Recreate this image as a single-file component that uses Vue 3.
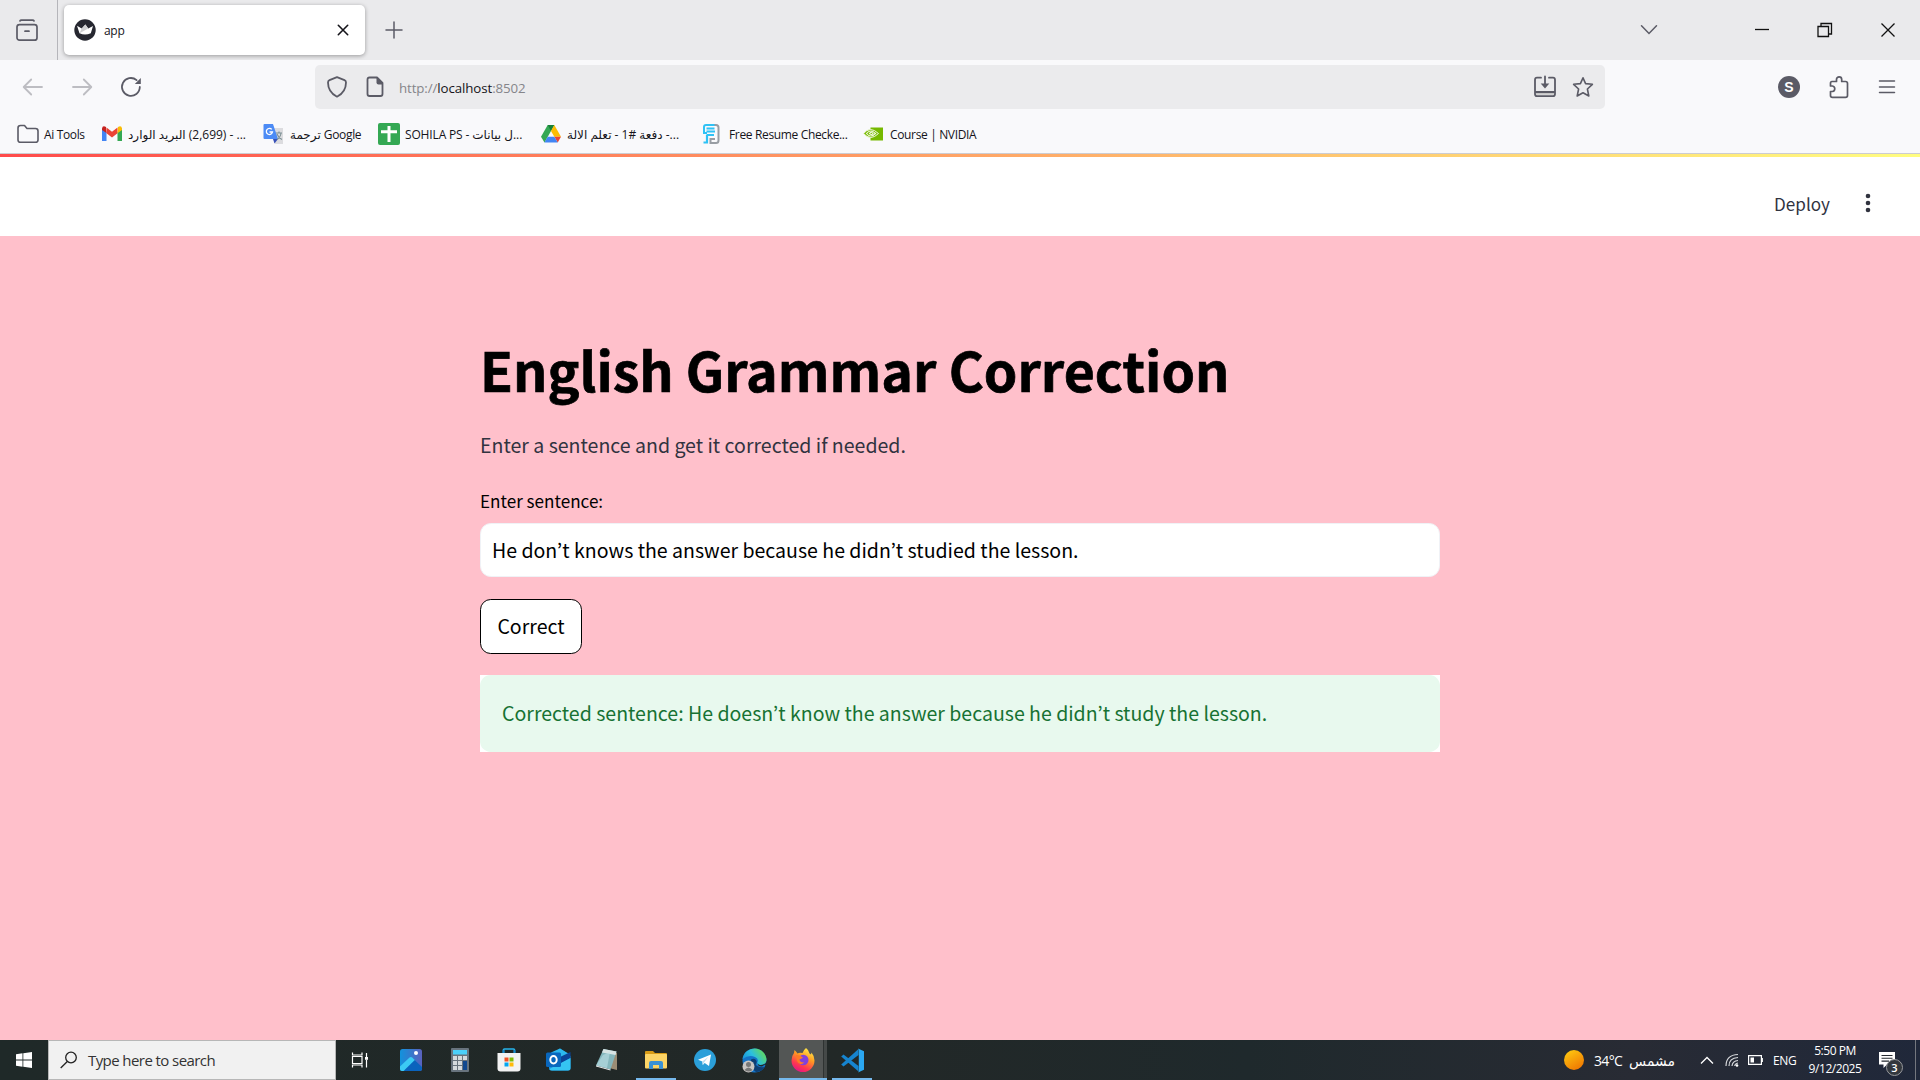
<script setup>
import { ref } from 'vue'

const sentence = ref('He don’t knows the answer because he didn’t studied the lesson.')
</script>

<template>
  <div class="screen">
    <header class="tabstrip">
      <div class="view-btn">
        <svg width="24" height="24" viewBox="0 0 24 24" fill="none" stroke="#5b5b66" stroke-width="1.7" stroke-linecap="round">
          <path d="M5 1.9Q5.3 1.2 6.500 1.200H17.500Q18.700 1.200 19 1.900" /><rect x="2" y="5.600" width="20" height="15.600" rx="2.500" /><path d="M10 12.200H14" />
        </svg>
      </div>
      <div class="tab">
        <svg width="22" height="22" viewBox="0 0 22 22">
          <circle cx="11" cy="11" r="10.700" fill="#262730" />
          <path d="M3 6.800 7.700 9.500 11.400 5.500 14.200 9.500 19 7 16.800 14.300Q11 16.700 5.500 14.300Z" fill="#fff" />
          <path d="M11.400 5.500 14.200 9.500 5.500 14.300 7.700 9.500Z" fill="#d0d0d2" />
        </svg>
        <span class="tab-title">app</span>
        <svg class="tab-close" width="12" height="12" viewBox="0 0 12 12" stroke="#15141a" stroke-width="1.600" stroke-linecap="round"><path d="M1.300 1.300 10.700 10.700M10.700 1.300 1.300 10.700" /></svg>
      </div>
      <svg class="plus" width="18" height="18" viewBox="0 0 18 18" stroke="#5b5b66" stroke-width="1.500" stroke-linecap="round"><path d="M9 1V17M1 9H17" /></svg>
      <div class="window-btns">
        <svg width="18" height="12" viewBox="0 0 18 12" fill="none" stroke="#5b5b66" stroke-width="1.500" stroke-linecap="round"><path d="M1.500 1.800 9 9.500 16.500 1.800" /></svg>
        <svg width="16" height="16" viewBox="0 0 16 16" stroke="#111" stroke-width="1.300"><path d="M1 7.500H15" /></svg>
        <svg width="16" height="16" viewBox="0 0 16 16" fill="none" stroke="#111" stroke-width="1.300"><path d="M4 4V1.500H14.500V12H12M1 4.500H11.500V14.500H1Z" /></svg>
        <svg width="16" height="16" viewBox="0 0 16 16" stroke="#111" stroke-width="1.300"><path d="M1.500 1.500 14.500 14.500M14.500 1.500 1.500 14.500" /></svg>
      </div>
    </header>

    <div class="navbar">
      <div class="nav-btns">
        <svg width="22" height="22" viewBox="0 0 22 22" fill="none" stroke="#bdbdc2" stroke-width="1.800" stroke-linecap="round" stroke-linejoin="round"><path d="M20 11H2M9.200 3.500 1.700 11 9.200 18.500" /></svg>
        <svg width="22" height="22" viewBox="0 0 22 22" fill="none" stroke="#bdbdc2" stroke-width="1.800" stroke-linecap="round" stroke-linejoin="round"><path d="M2 11H20M12.800 3.500 20.300 11 12.800 18.500" /></svg>
        <svg width="22" height="22" viewBox="0 0 22 22" fill="none" stroke="#5b5b66" stroke-width="1.800" stroke-linecap="round"><path d="M19.800 11A8.900 8.900 0 1 1 16.600 4.100" /><path d="M20.800 2V8H14.800Z" fill="#5b5b66" stroke="none" /></svg>
      </div>
      <div class="urlbar">
        <svg width="22" height="22" viewBox="0 0 22 22" fill="none" stroke="#5b5b66" stroke-width="1.800" stroke-linejoin="round"><path d="M11 1.200 18.500 4.200Q20 4.800 20 6.400 20 16 11 20.700 2 16 2 6.400 2 4.800 3.500 4.200Z" /></svg>
        <svg class="page-icon" width="18" height="22" viewBox="0 0 18 22" fill="none" stroke="#5b5b66" stroke-width="1.800"><path d="M11 1.500H3.500Q1.500 1.500 1.500 3.500V18Q1.500 20 3.500 20H14.500Q16.500 20 16.500 18V7Z" stroke-linejoin="round" /><path d="M10.500 1 17 7.500V8.500H12.500Q10.500 8.500 10.500 6.500Z" fill="#5b5b66" stroke="none" /></svg>
        <span class="url">http://<b>localhost</b>:8502</span>
        <svg class="install" width="24" height="24" viewBox="0 0 24 24" fill="none" stroke="#5b5b66" stroke-width="1.800" stroke-linecap="round"><path d="M8 2.700H4Q2 2.700 2 4.700V19Q2 21.200 4 21.200H20Q22 21.200 22 19V4.700Q22 2.700 20 2.700H16M2 17H22M12 1.500V11" /><path d="M7.700 8.500H16.300L12 13.500Z" fill="#5b5b66" stroke="none" /><path d="M3 18.200H21V19.500H3Z" fill="#bbb" stroke="none" /></svg>
        <svg width="22" height="22" viewBox="0 0 22 22" fill="none" stroke="#5b5b66" stroke-width="1.600" stroke-linejoin="round"><path d="M11 1.800 13.600 7.600 20.400 8.300 15.400 13 16.800 20 11 16.800 5.200 20 6.600 13 1.600 8.300 8.400 7.600Z" /></svg>
      </div>
      <div class="nav-right">
        <div class="avatar">S</div>
        <svg width="22" height="24" viewBox="0 0 22 24" fill="none" stroke="#5b5b66" stroke-width="1.700" stroke-linejoin="round"><path d="M4 6.500H8.500V4.500A2.600 2.600 0 0 1 13.700 4.500V6.500H17.500Q19.500 6.500 19.500 8.500V20.500Q19.500 22.300 17.500 22.300H4.500Q2.500 22.300 2.500 20.500V16.500H4.500A2.800 2.800 0 0 0 4.500 11H2.500V8.300Q2.500 6.500 4 6.500Z" /></svg>
        <svg width="18" height="16" viewBox="0 0 18 16" stroke="#5b5b66" stroke-width="1.500" stroke-linecap="round"><path d="M1.500 2H16.500M1.500 8H16.500M1.500 13.500H16.500" /></svg>
      </div>
    </div>

    <nav class="bookmarks">
      <div class="bm" style="width: 85px">
        <svg width="22" height="20" viewBox="0 0 22 20" fill="none" stroke="#5b5b66" stroke-width="1.600" stroke-linejoin="round"><path d="M1 4Q1 1.500 3.500 1.500H7.500L10 4.500H18.500Q21 4.500 21 7V16Q21 18.300 18.500 18.300H3.500Q1 18.300 1 16Z" /></svg>
        <span class="t-tools">Ai Tools</span>
      </div>
      <div class="bm" style="width: 161px">
        <svg width="20" height="20" viewBox="0 0 20 20"><path d="M0 4V17H4.500V8Z" fill="#4285f4" /><path d="M20 4V17H15.500V8Z" fill="#34a853" /><path d="M0 4.500Q.5 1.200 4 3L4.500 9 0 6Z" fill="#c5221f" /><path d="M4.500 3.500 10 7.800 15.500 3.500V9.200L10 13.500 4.500 9.200Z" fill="#ea4335" /><path d="M20 4.500Q19.500 1.200 16 3L15.500 9.200 20 6Z" fill="#fbbc04" /></svg>
        <span class="t-mail"><bdi>البريد الوارد</bdi> <bdi>(2,699) - ...</bdi></span>
      </div>
      <div class="bm" style="width: 115px">
        <svg width="21" height="22" viewBox="0 0 21 22"><path d="M8 5H20V21H12Z" fill="#dcdcdf" /><path d="M1.500 1H10L15 16H1.500Q.5 16 .5 15V2Q.5 1 1.500 1Z" fill="#4c8bf5" /><path d="M10 16H15L11.500 20.500Z" fill="#3851b8" /><path d="M8.800 6.400A3.100 3.100 0 1 0 9.500 9H6.500" fill="none" stroke="#fff" stroke-width="1.300" /><path d="M13 10H19M16 8.500V10M14 16.500Q17.500 14.500 18 10M14 11Q15.500 15 19 16.500" fill="none" stroke="#7d9095" stroke-width="1.100" /></svg>
        <span class="t-google"><bdi>ترجمة</bdi> Google</span>
      </div>
      <div class="bm" style="width: 163px">
        <svg class="sheet" width="22" height="22" viewBox="0 0 22 22"><rect width="22" height="22" rx="2" fill="#34a853" /><path d="M11 3V19M3 8.800H19" stroke="#fff" stroke-width="3" /></svg>
        <span class="t-ps">SOHILA PS - <bdi>ل بيانات</bdi>...</span>
      </div>
      <div class="bm" style="width: 161px">
        <svg width="20" height="18" viewBox="0 0 20 18"><path d="M6.700 0H13.300L10 6 3.500 17.500 0 11.700Z" fill="#34a853" /><path d="M6.700 0H13.300L10 6Z" fill="#188038" /><path d="M13.300 0 20 11.700H13.300L10 6Z" fill="#fbbc04" /><path d="M13.300 11.700H20L16.700 17.500Z" fill="#ea4335" /><path d="M6.700 11.700H13.300L16.700 17.500H3.400Z" fill="#4285f4" /></svg>
        <span class="t-batch"><bdi dir="rtl">دفعة #1 - تعلم الالة</bdi> -...</span>
      </div>
      <div class="bm" style="width: 161px">
        <svg class="resume" width="18" height="22" viewBox="0 0 18 22" fill="none"><path d="M9 2H14Q16.500 2 16.500 4.500V17.500Q16.500 20 14 20H8.500V16H13" stroke="#989da3" stroke-width="2" /><path d="M12.500 2H4Q2 2 2 4V10H5" stroke="#2fc2f5" stroke-width="2" /><path d="M4.500 5.500H12.500M4.500 8.500H13M4.500 12H12M5 12V19.500H1.500" stroke="#2fc2f5" stroke-width="2.200" /></svg>
        <span class="t-resume">Free Resume Checke...</span>
      </div>
      <div class="bm">
        <svg width="20" height="14" viewBox="0 0 20 14"><path d="M7.500.5H20V13.500H7.500Z" fill="#76b900" /><path d="M.5 6.500Q7-1.500 15.500 6.500 7.500 14.500.5 6.500Z" fill="#76b900" stroke="#f1f8df" stroke-width="1" /><path d="M3.500 6.500Q7.500 1.500 12.500 6.500 7.500 11.500 3.500 6.500ZM6.500 6.500Q8.500 4 10 6.500 8.500 8.500 6.500 6.500Z" fill="none" stroke="#f1f8df" stroke-width="1.100" /></svg>
        <span class="t-nv">Course | NVIDIA</span>
      </div>
    </nav>

    <div class="rainbow"></div>
    <div class="app-header">
      <span class="deploy">Deploy</span>
      <svg width="6" height="20" viewBox="0 0 6 20" fill="#31333f"><circle cx="3" cy="3" r="2.300" /><circle cx="3" cy="10" r="2.300" /><circle cx="3" cy="17" r="2.300" /></svg>
    </div>

    <main class="page">
      <section class="block">
        <h1>English Grammar Correction</h1>
        <p class="intro">Enter a sentence and get it corrected if needed.</p>
        <label class="label" for="sentence">Enter sentence:</label>
        <input id="sentence" v-model="sentence" class="field" type="text" />
        <button class="submit" type="button">Correct</button>
        <div class="alert-wrap"><div class="alert">Corrected sentence: He doesn’t know the answer because he didn’t study the lesson.</div></div>
      </section>
    </main>

    <footer class="taskbar">
      <div class="start">
        <svg width="16" height="16" viewBox="0 0 16 16" fill="#fff"><path d="M0 2.200 6.500 1.300V7.600H0ZM7.300 1.200 16 0V7.600H7.300ZM0 8.400H6.500V14.700L0 13.800ZM7.300 8.400H16V16L7.300 14.800Z" /></svg>
      </div>
      <div class="search">
        <svg width="18" height="18" viewBox="0 0 18 18" fill="none" stroke="#222" stroke-width="1.300"><circle cx="11" cy="6.500" r="5.300" /><path d="M7.300 10.500.7 17" /></svg>
        <span>Type here to search</span>
      </div>
      <div class="apps">
        <div class="cell tasks">
          <svg width="18" height="18" viewBox="0 0 18 18" fill="none" stroke="#fff" stroke-width="1.200"><path d="M1.500 1.500V4H11V1.500M1.500 16.500V14H11V16.500M1.500 5.500H11V12.500H1.500ZM15.500 2V6M15.500 9V16.500" /><rect x="14" y="6" width="3" height="2.800" fill="#fff" stroke="none" /></svg>
        </div>
        <div class="cell nudge">
          <svg width="22" height="22" viewBox="0 0 22 22"><defs><linearGradient id="ph" x1="0" x2="1"><stop stop-color="#1292dd" /><stop offset="1" stop-color="#5a61bd" /></linearGradient></defs><rect width="22" height="22" rx="2.500" fill="url(#ph)" /><path d="M8 14 13 9.500 22 18V20Q22 22 20 22H4Z" fill="#0a63bd" /><path d="M0 17.500 9.500 8.500Q11 7.300 12.500 8.700L14.800 11 3.500 22H2Q0 22 0 20Z" fill="#3ccbf4" /><circle cx="16" cy="4" r="2" fill="#fff" /></svg>
        </div>
        <div class="cell nudge">
          <svg width="18" height="24" viewBox="0 0 18 24"><rect width="18" height="24" rx="1" fill="#68737d" /><rect x="2" y="2" width="14" height="4.500" fill="#4bd0fa" /><g fill="#d5dadd"><rect x="2" y="8" width="4" height="4" /><rect x="7" y="8" width="4" height="4" /><rect x="12" y="8" width="4" height="4" /><rect x="2" y="13" width="4" height="4" /><rect x="7" y="13" width="4" height="4" /><rect x="2" y="18" width="4" height="4" /><rect x="7" y="18" width="4" height="4" /></g><rect x="12" y="13" width="4" height="9" fill="#12498f" /></svg>
        </div>
        <div class="cell nudge">
          <svg width="24" height="24" viewBox="0 0 24 24"><path d="M6.500 7V2Q6.500 1 7.500 1H16.500Q17.500 1 17.500 2V7" fill="none" stroke="#26b4ec" stroke-width="1.700" /><path d="M.5 5H23.500V20.500Q23.500 23.500 20.500 23.500H3.500Q.5 23.500.5 20.500Z" fill="#f3f3f3" /><path d="M6.500 5V2M17.500 2V5" stroke="#1389cf" stroke-width="1.700" /><path d="M7.500 9.500H11.500V13.500H7.500Z" fill="#f35325" /><path d="M12.500 9.500H16.500V13.500H12.500Z" fill="#81bc06" /><path d="M7.500 14.500H11.500V18.500H7.500Z" fill="#05a6f0" /><path d="M12.500 14.500H16.500V18.500H12.500Z" fill="#ffba08" /></svg>
        </div>
        <div class="cell nudge">
          <svg width="25" height="24" viewBox="0 0 25 24"><path d="M3 8 14 .5 24.500 8V20Q24.500 22.500 22 22.500H6Q3 22.500 3 20Z" fill="#1490df" /><path d="M5 4.500 14 .5 24 6.500 14 13Z" fill="#2cb8ef" /><path d="M24.500 4V10L14 16V9Z" fill="#0b4397" /><path d="M24.500 10V20Q24.500 22.500 22 22.500H6Q4 22.500 3.300 21Z" fill="#35c4f2" /><rect y="4.500" width="15" height="14.500" rx="1.500" fill="#0967bd" /><ellipse cx="7.500" cy="11.800" rx="3.200" ry="3.700" fill="none" stroke="#fff" stroke-width="2" /></svg>
        </div>
        <div class="cell">
          <svg width="24" height="24" viewBox="0 0 24 24"><path d="M8 2 22 5V22L16 20.500Z" fill="#9b8d75" /><path d="M8.500 1 21.500 3.500 15.500 21.500 1 17.500Z" fill="#85b7bd" /><path d="M8.500 1 21.500 3.500 20.500 7 7 4.500Z" fill="#d8e4e4" /><path d="M8 7 15 4 12 20 1 17.500Z" fill="#bce0e4" opacity=".6" /><path d="M1 17.500 15.500 21.500V22.500L1 18.500Z" fill="#eee" /></svg>
        </div>
        <div class="cell open">
          <svg width="22" height="20" viewBox="0 0 22 20"><path d="M0 2Q0 1 1 1H8L10 3H21Q22 3 22 4V8H0Z" fill="#d89b16" /><rect y="4" width="22" height="14.500" rx="1" fill="#fcd466" /><path d="M4 19V13Q4 11 6 11H16Q18 11 18 13V19H14V15H8V19Z" fill="#3a91d4" /></svg>
        </div>
        <div class="cell">
          <svg width="22" height="22" viewBox="0 0 22 22"><circle cx="11" cy="11" r="11" fill="#2b9fd9" /><path d="M4 10.800 17 5.500 15 17 10.700 14 8.800 16 8.300 12.500Z" fill="#fff" /><path d="M8.300 12.500 14.500 7.800 10 13.500 8.800 16Z" fill="#bdddef" /></svg>
        </div>
        <div class="cell">
          <svg width="25" height="25" viewBox="0 0 25 25"><defs><linearGradient id="ed" x1="0" y1=".8" x2="1" y2=".3"><stop stop-color="#158bd8" /><stop offset=".5" stop-color="#2bbfe0" /><stop offset="1" stop-color="#67dc4e" /></linearGradient></defs><circle cx="12.500" cy="12.500" r="12" fill="#1473c7" /><path d="M.6 11A12 12 0 0 1 24.500 12Q24 17 18 17 14 17 15.500 14 17 11 13 9 7 6 .6 11Z" fill="url(#ed)" /><path d="M9 11.500Q12 10 14 12 15.500 14 13.700 16.500 16 20 23 19 19.500 24 14 24 8.500 20 9 11.500Z" fill="#0d3e73" /><path d="M15.800 14.500Q15 18.500 20 18.500L23 16.500 25 20V12.500Q24 17 18 17Q15.500 16.500 15.800 14.500Z" fill="#20282a" /><circle cx="6.500" cy="18.500" r="6" fill="#c8c5c3" /><circle cx="6.500" cy="16.500" r="2.500" fill="#777" /><path d="M2.500 22Q6.500 17 10.500 22 6.500 25 2.500 22Z" fill="#777" /></svg>
        </div>
        <div class="cell active">
          <svg width="24" height="24" viewBox="0 0 24 24"><defs><linearGradient id="ff" x1=".8" y1="0" x2=".3" y2="1"><stop stop-color="#fff44f" /><stop offset=".4" stop-color="#ff9a22" /><stop offset=".75" stop-color="#ff3750" /><stop offset="1" stop-color="#e31587" /></linearGradient></defs><path d="M15 0Q18 2 18.500 5.500L20 6.500 20.500 4.500Q23.500 8 23.500 12.500A11.500 11.500 0 0 1 .5 12.500Q.5 8 3 5L3.500 2Q5 3 6.500 5.500Q8 4.500 11.500 5 12.500 2 15 0Z" fill="url(#ff)" /><circle cx="12.300" cy="12" r="5.200" fill="#8140dc" /><path d="M5 7Q8.500 6.500 12 9.500 10 11.500 8.500 11.300 9 15 13.500 14.500 8.500 18.500 6 13Z" fill="#ff7a24" /></svg>
        </div>
        <div class="cell open code">
          <svg width="25" height="25" viewBox="0 0 25 25"><path d="M1.200 8.500 3.500 6.500 18.500 18V23.500Z" fill="#1684cf" /><path d="M1.200 16.500 3.500 18.500 18.500 7V1Z" fill="#1684cf" /><path d="M18 .5 24 3.300V21.700L18 24.500Q19 23.800 18.800 22V3Q18.800 1.300 18 .5Z" fill="#2ba8f2" /></svg>
        </div>
      </div>
      <div class="tray">
        <div class="sun"></div>
        <span class="temp">34°C</span>
        <bdi class="weather">مشمس</bdi>
        <svg class="up" width="14" height="9" viewBox="0 0 14 9" fill="none" stroke="#fff" stroke-width="1.300"><path d="M1 7.500 7 1.500 13 7.500" /></svg>
        <svg class="wifi" width="15" height="14" viewBox="0 0 15 14" fill="none" stroke="#d5d7da" stroke-width="1.200"><path d="M1 13Q1 2 13 1.500M4 13Q4 5 13 4.500M7 13Q7.500 8 13 7.500M9.700 13Q10 10.500 13 10" /><circle cx="12" cy="12.500" r="1.300" fill="#fff" stroke="none" /></svg>
        <svg class="battery" width="16" height="10" viewBox="0 0 16 10"><path d="M.6.6H13.400V9.400H.6ZM14.300 3V7" fill="none" stroke="#fff" stroke-width="1.200" /><path d="M2.500 2.500H6V7.500H2.500Z" fill="#fff" /></svg>
        <span class="eng">ENG</span>
        <div class="clock"><span class="time">5:50 PM</span><span class="date">9/12/2025</span></div>
        <div class="notice">
          <svg width="16" height="16" viewBox="0 0 16 16"><path d="M0 0H16V12.500H8L4.500 16V12.500H0Z" fill="#fff" /><path d="M2.500 3.500H13.500M2.500 6.300H13.500M2.500 9.100H10" stroke="#252a31" stroke-width="1.100" /></svg>
          <span class="badge">3</span>
        </div>
        <div class="peek"></div>
      </div>
    </footer>
  </div>
</template>

<style>
body { margin: 0; overflow: hidden; }
</style>

<style scoped>
.screen { width: 1920px; height: 1080px; display: flex; flex-direction: column; overflow: hidden; background: #ffc0cb; font-family: "Open Sans", "Noto Sans", "DejaVu Sans", sans-serif; }
.screen * { box-sizing: border-box; }
svg { display: block; flex: none; }
span, bdi { white-space: nowrap; }

.tabstrip { height: 60px; flex: none; display: flex; align-items: center; background: #eaeaec; }
.view-btn { width: 58px; height: 60px; padding: 19px 0 0 15px; border-right: 1px solid #b5b5ba; }
.tab { width: 301px; height: 50px; margin-left: 6px; padding: 0 16px 0 10px; display: flex; align-items: center; background: #fff; border-radius: 5px; box-shadow: 0 1px 4px rgba(0, 0, 0, .35); }
.tab-title { margin-left: 8px; padding-top: 1px; font-size: 12px; color: #15141a; letter-spacing: -.3px; }
.tab-close { margin-left: auto; }
.plus { margin-left: 20px; }
.window-btns { margin-left: auto; display: flex; align-items: center; padding-right: 24px; }
.window-btns svg + svg { margin-left: 47px; }
.window-btns svg:nth-child(2) { margin-left: 96px; }

.navbar { height: 54px; flex: none; display: flex; align-items: center; background: #f9f9fb; }
.nav-btns { width: 315px; padding-left: 22px; display: flex; gap: 27px; }
.urlbar { width: 1290px; height: 44px; padding: 0 11px; display: flex; align-items: center; background: #ebebed; border-radius: 5px; }
.page-icon { margin-left: 18px; }
.url { margin-left: 15px; padding-top: 1px; font-size: 13.300px; color: #85858a; letter-spacing: -.1px; }
.url b { font-weight: 400; color: #15141a; }
.install { margin-left: auto; margin-right: 15px; }
.nav-right { margin-left: 173px; display: flex; align-items: center; }
.avatar { width: 22px; height: 22px; border-radius: 50%; background: #5b5b66; color: #fff; font: 700 14px/22px "Liberation Sans", sans-serif; text-align: center; }
.nav-right svg:nth-child(2) { margin-left: 28px; }
.nav-right svg:nth-child(3) { margin-left: 28px; }

.bookmarks { height: 40px; flex: none; display: flex; align-items: center; padding: 1px 0 0 17px; background: #f9f9fb; border-bottom: 1px solid #ccccd1; font-size: 12px; color: #15141a; }
.bm { height: 22px; display: flex; align-items: center; gap: 6px; }
.bm span { padding-top: 1px; letter-spacing: -.35px; }
.bm .sheet { margin-right: -1px; }
.bm .resume { margin: 0 3px 0 0; }
.bm .t-tools { margin-left: -1px; }
.bm .t-ps { letter-spacing: -.15px; }
.bm .t-batch { letter-spacing: -.02px; }
.bm .t-nv { margin-left: 1px; }

.rainbow { height: 3px; flex: none; background: linear-gradient(90deg, #ff4b4b, #fffd80); }
.app-header { height: 79px; flex: none; display: flex; align-items: center; padding: 12px 49px 0 0; justify-content: flex-end; background: #fff; }
.app-header svg { margin-left: 35px; }
.deploy, .page, .field, .submit { font-family: "Noto Sans CJK KR", "Noto Sans", sans-serif; }
.deploy { font-size: 17.100px; color: #31333f; padding-top: 1px; }

.page { flex: 1; display: flex; justify-content: center; }
.block { width: 960px; padding-top: 98px; display: flex; flex-direction: column; align-items: flex-start; color: #000; }
h1 { margin: 0; font-size: 53.700px; line-height: 70px; font-weight: 700; white-space: nowrap; -webkit-text-stroke: .7px #000; }
.intro { margin: 24px 0 0; font-size: 19.540px; line-height: 34px; color: #31333f; white-space: nowrap; }
.label { margin-top: 25px; font-size: 17.100px; line-height: 28px; }
.field { width: 960px; height: 54px; margin-top: 8px; padding: 0 11px 2px; border: 1px solid #f0f2f6; border-radius: 10.700px; background: #fff; font-size: 19.540px; color: #000; outline: none; }
.submit { width: 102px; height: 55px; margin-top: 22px; padding: 0 0 2px; border: 1px solid #000; border-radius: 10.700px; background: #fff; font-size: 19.540px; color: #000; white-space: nowrap; }
.alert-wrap { width: 960px; margin-top: 21px; background: #fff; }
.alert { height: 77px; padding: 0 22px; line-height: 75px; border-radius: 10.700px; background: #e8f9ee; color: #177233; font-size: 19.540px; white-space: nowrap; }

.taskbar { height: 40px; flex: none; display: flex; background: linear-gradient(90deg, #1f2928, #222827 45%, #1f292c 65%, #282b34 85%, #20283a); color: #fff; }
.start { width: 48px; display: grid; place-items: center; }
.search { width: 288px; height: 40px; padding-left: 11px; display: flex; align-items: center; background: #f1f1f1; border: 1px solid #b7b7b7; color: #333; font-size: 15px; }
.search span { margin-left: 10px; letter-spacing: -.58px; }
.apps { display: flex; }
.cell { width: 49.200px; display: grid; place-items: center; }
.cell.tasks { padding-right: 2px; }
.cell.nudge { padding-left: 2px; }
.cell.open { background: linear-gradient(#76b9ed, #76b9ed) center bottom / 40px 2px no-repeat; }
.cell.active { width: 48px; background: linear-gradient(#76b9ed, #76b9ed) bottom / 100% 2px no-repeat, linear-gradient(90deg, #535655 44px, #2f3332 44px 45px, #454948 45px); }
.cell.code { margin-left: 1px; }
.tray { margin-left: auto; display: flex; align-items: center; font-size: 13px; }
.sun { width: 20px; height: 20px; border-radius: 50%; background: linear-gradient(150deg, #ffcf11, #ee6c00); }
.temp { width: 38px; margin-left: 10px; font-size: 14px; letter-spacing: -.65px; }
.weather { width: 43px; font-size: 14px; }
.up { margin-left: 25px; }
.wifi { margin-left: 11px; }
.battery { margin-left: 8px; }
.eng { width: 32px; margin-left: 9px; font-size: 12px; letter-spacing: -.4px; }
.clock { width: 60px; display: flex; flex-direction: column; align-items: center; font-size: 12px; line-height: 18px; letter-spacing: -.45px; }
.notice { position: relative; width: 36px; height: 40px; padding: 12px 0 0 14px; }
.badge { position: absolute; left: 21px; top: 19px; width: 17px; height: 17px; border: 1px solid #989a9d; border-radius: 50%; background: #33383e; font-size: 11px; font-weight: 600; line-height: 15px; text-align: center; }
.peek { width: 5px; height: 40px; margin-left: 14px; border-left: 1px solid #74777e; }
</style>
